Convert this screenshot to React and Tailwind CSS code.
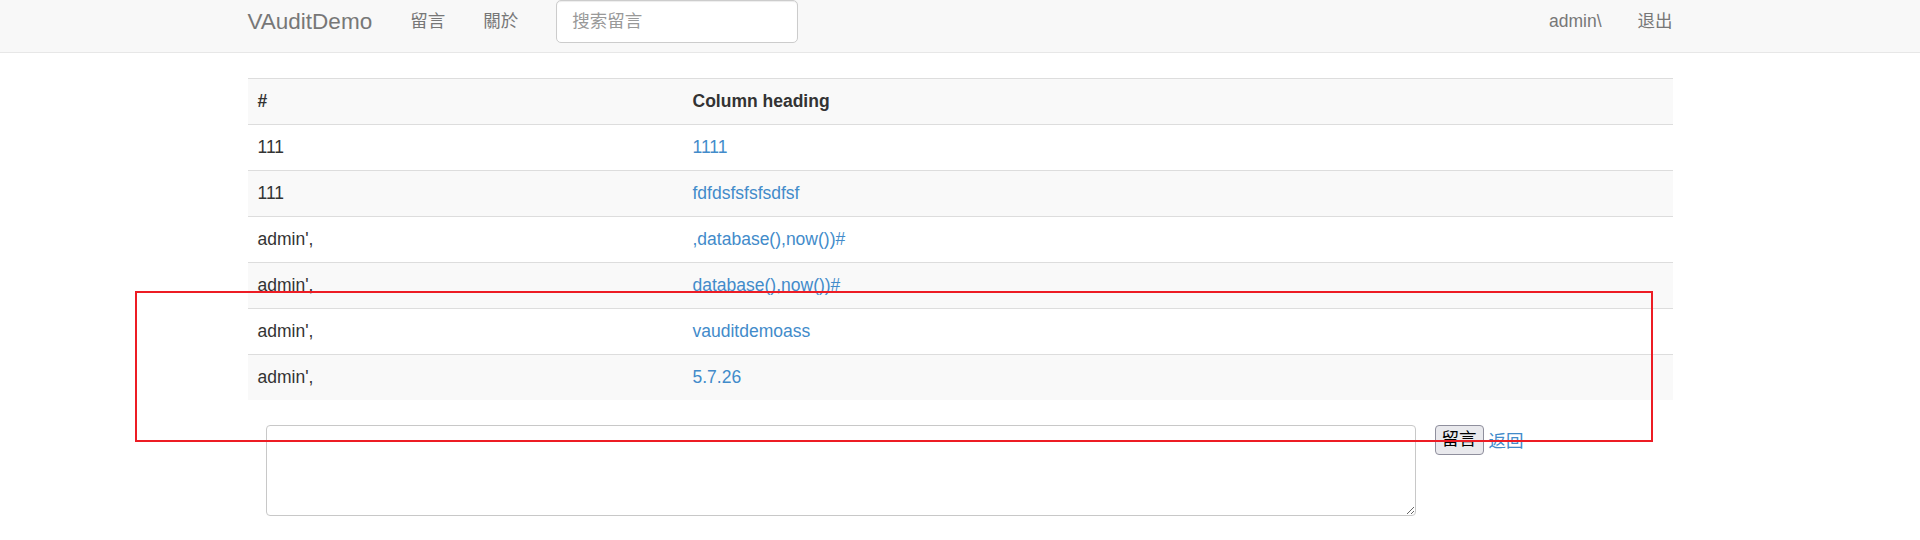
const rows = [
  ['111', '1111'],
  ['111', 'fdfdsfsfsfsdfsf'],
  ["admin',", ',database(),now())#'],
  ["admin',", 'database(),now())#'],
  ["admin',", 'vauditdemoass'],
  ["admin',", '5.7.26'],
]

const font = "font-['Liberation_Sans','Noto_Sans_CJK_SC',sans-serif]"

export default function App() {
  return (
    <div className={`relative min-h-[540px] bg-white text-[17.5px] text-[#333] ${font}`}>
      {/* Navbar */}
      <div className="h-[53px] border-b border-[#e7e7e7] bg-[#f8f8f8]">
        <div className="mx-auto flex h-[43px] w-[1425px] items-center">
          <span className="pr-[19px] text-[22.5px] text-[#777]">VAuditDemo</span>
          <a className="px-[19px] text-[#777]">留言</a>
          <a className="px-[19px] text-[#777]">關於</a>
          <div className="self-start pl-[19px]">
            <input
              placeholder="搜索留言"
              className="h-[43px] w-[242px] rounded-[5px] border border-[#ccc] bg-white px-[15px] text-[17.5px] text-[#555] shadow-[inset_0_1px_1px_rgba(0,0,0,0.075)] outline-none placeholder:text-[#999]"
            />
          </div>
          <div className="ml-auto flex items-center">
            <a className="pr-[18px] text-[#777]">admin\</a>
            <a className="pl-[18px] text-[#777]">退出</a>
          </div>
        </div>
      </div>

      <div className="mx-auto w-[1425px] pt-[25px]">
        {/* Table */}
        <div className="border-b-0">
          <div className="grid h-[46px] grid-cols-[435px_1fr] items-center border-t border-[#ddd] bg-[#f9f9f9] font-bold">
            <span className="px-[10px]">#</span>
            <span className="px-[10px]">Column heading</span>
          </div>
          {rows.map(([name, msg], i) => (
            <div
              key={i}
              className={`grid h-[46px] grid-cols-[435px_1fr] items-center border-t border-[#ddd] ${i % 2 === 1 ? 'bg-[#f9f9f9]' : 'bg-white'}`}
            >
              <span className="px-[10px]">{name}</span>
              <a className="px-[10px] text-[#428bca]">{msg}</a>
            </div>
          ))}
        </div>

        {/* Message form */}
        <div className="mt-[25px] ml-[18px] flex items-start">
          <textarea className="h-[91px] w-[1150px] rounded-[4px] border border-[#c8c8c8] bg-white outline-none" />
          <button className="ml-[19px] h-[30px] w-[49px] rounded-[4px] border border-[#8f8f9d] bg-[#e9e9ed] text-[17.5px] leading-none text-black">
            留言
          </button>
          <a className="ml-[5px] mt-[3px] text-[#428bca]">返回</a>
        </div>
      </div>

      {/* Annotation box */}
      <div className="pointer-events-none absolute left-[135px] top-[291px] h-[151px] w-[1518px] border-2 border-[#ed1c24]" />
    </div>
  )
}
